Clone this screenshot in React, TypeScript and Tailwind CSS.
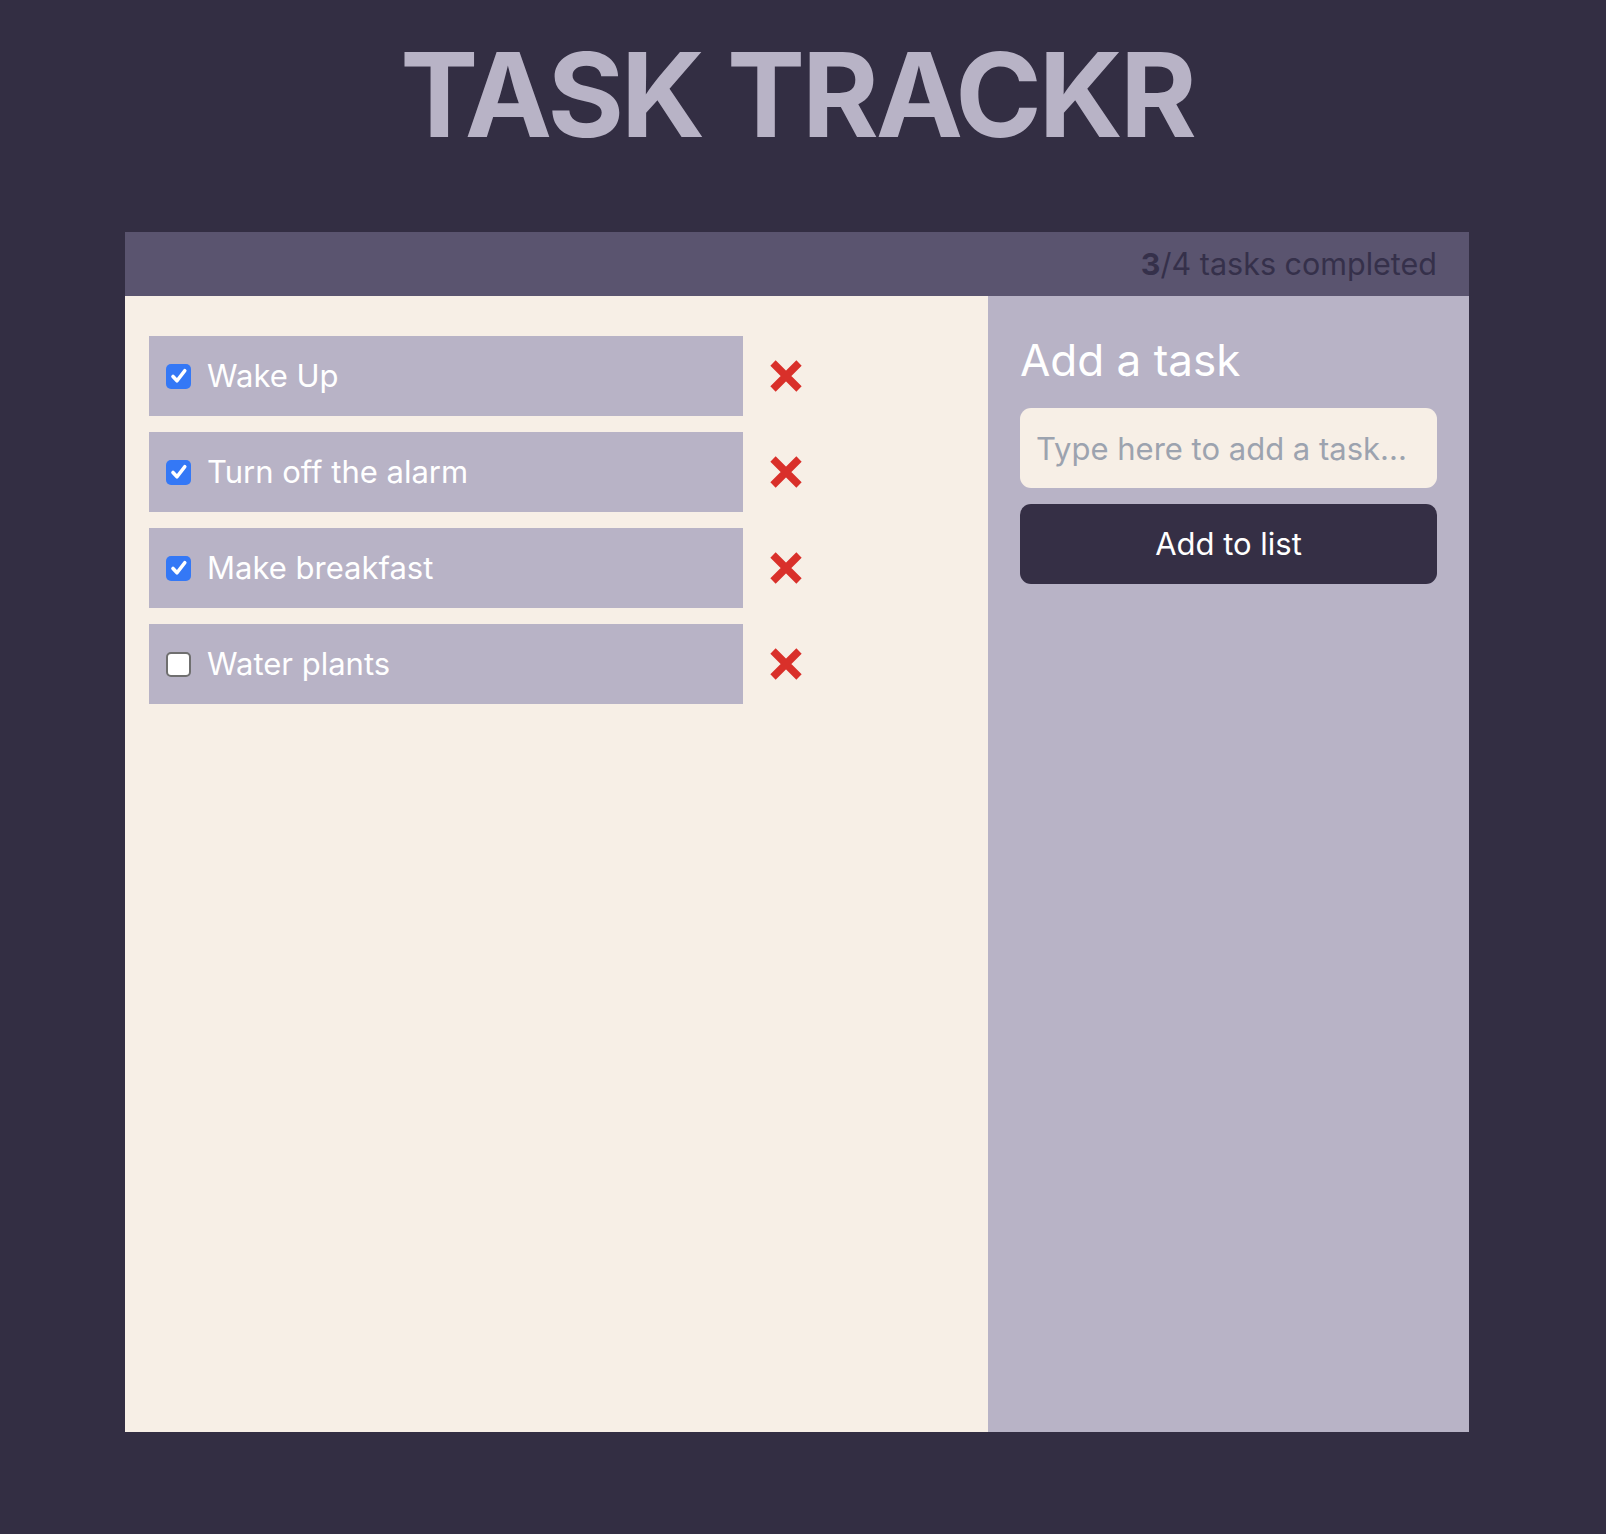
import React from "react";

const tasks = [
  { label: "Wake Up", done: true },
  { label: "Turn off the alarm", done: true },
  { label: "Make breakfast", done: true },
  { label: "Water plants", done: false },
];

function Check({ done }: { done: boolean }) {
  if (done) {
    return (
      <span className="flex h-[25px] w-[25px] shrink-0 items-center justify-center rounded-[5px] bg-[#3478f6]">
        <svg width="20" height="20" viewBox="0 0 16 16" fill="none">
          <path d="M3.2 8.4 L6.4 11.8 L12.6 3.8" stroke="#ffffff" strokeWidth="2.9" strokeLinecap="round" strokeLinejoin="round" />
        </svg>
      </span>
    );
  }
  return <span className="block h-[25px] w-[25px] shrink-0 rounded-[5px] border-2 border-[#6f6f6f] bg-white" />;
}

function RedX() {
  return (
    <svg width="32" height="32" viewBox="0 0 32 32" className="shrink-0">
      <path d="M3 3 L29 29 M29 3 L3 29" stroke="#d9302a" strokeWidth="7.5" strokeLinecap="butt" />
    </svg>
  );
}

export default function App() {
  return (
    <div className="min-h-[1534px] w-full bg-[#332e43]" style={{ fontFamily: "Inter, 'Noto Sans', sans-serif" }}>
      <div className="w-[1594px] pt-[36px]">
        <h1 className="text-center text-[117px] font-bold leading-none tracking-[-3px] text-[#b8b3c6]">TASK TRACKR</h1>
        <div className="mx-auto mt-[79px] w-[1344px]">
          <div className="flex h-[64px] items-center justify-end bg-[#5a546f] pr-[32px] text-[30.5px] leading-[64px] text-[#35304a]">
            <span>
              <span className="font-bold">3</span>/4 tasks completed
            </span>
          </div>
          <div className="flex h-[1136px]">
            <div className="w-[863px] bg-[#f7efe6] pl-[24px] pt-[40px]">
              <div className="flex flex-col gap-[16px]">
                {tasks.map((t) => (
                  <div key={t.label} className="flex items-center">
                    <div className="flex h-[80px] w-[594px] items-center gap-[16px] bg-[#b8b3c6] pl-[17px]">
                      <Check done={t.done} />
                      <span className="text-[31px] text-white">{t.label}</span>
                    </div>
                    <div className="ml-[27px]">
                      <RedX />
                    </div>
                  </div>
                ))}
              </div>
            </div>
            <div className="flex-1 bg-[#b8b3c6] px-[32px] pt-[38px]">
              <h2 className="mb-[22px] text-[44px] font-normal leading-[52px] text-white">Add a task</h2>
              <div className="flex flex-col gap-[16px]">
                <input
                  placeholder="Type here to add a task..."
                  className="h-[80px] w-full rounded-[11px] bg-[#f7efe6] px-[16px] text-[31px] text-[#35304a] outline-none placeholder:text-[#9ca3af]"
                />
                <button className="h-[80px] w-full rounded-[11px] bg-[#352f45] text-[31px] text-white">Add to list</button>
              </div>
            </div>
          </div>
        </div>
      </div>
    </div>
  );
}
